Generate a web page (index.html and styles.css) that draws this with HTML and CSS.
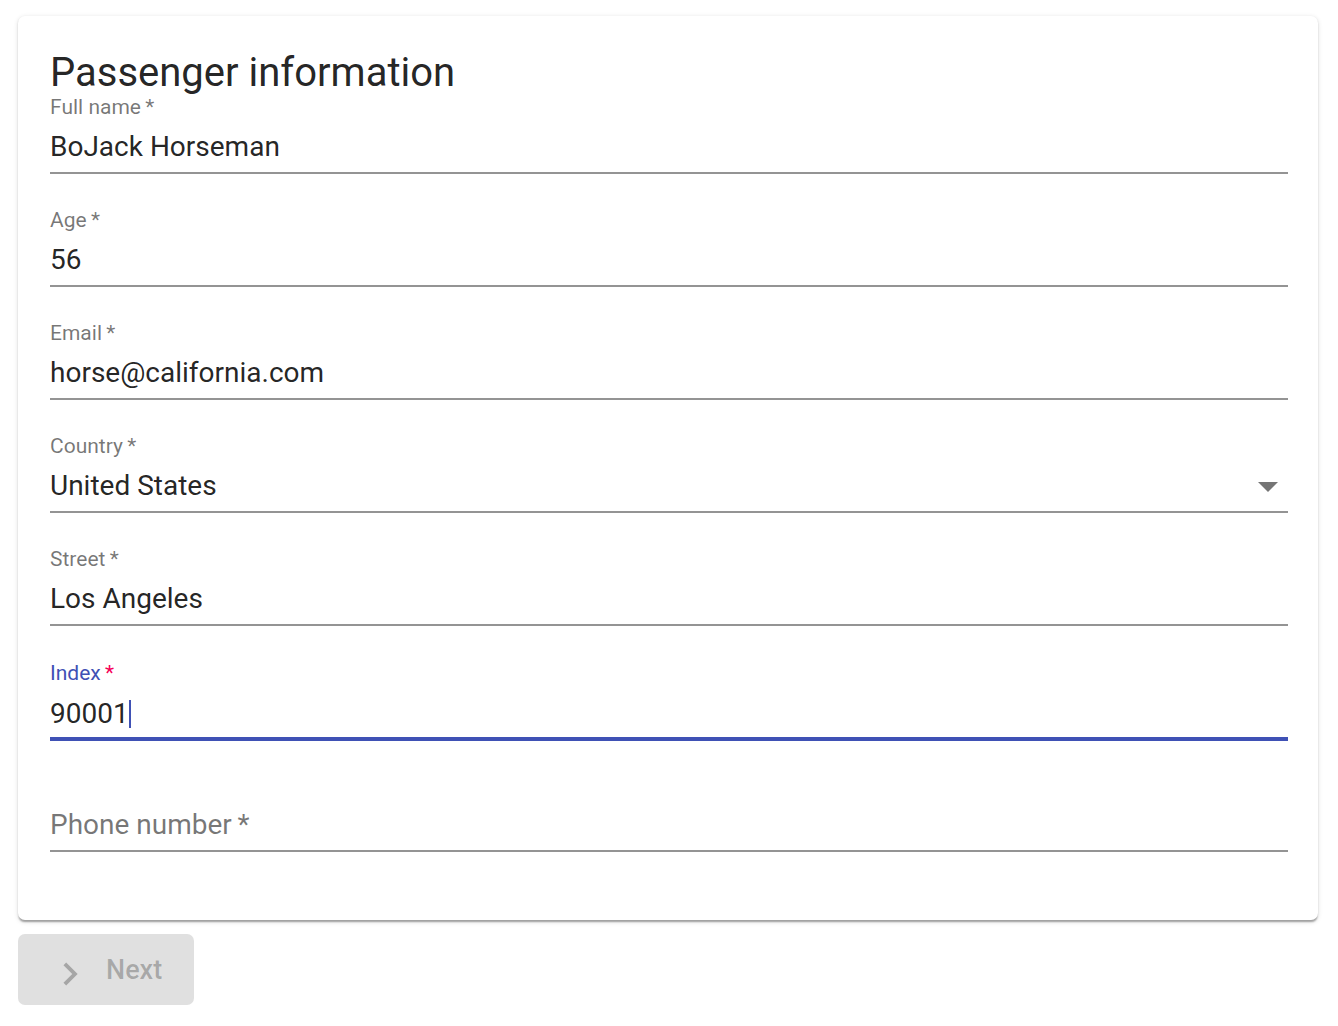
FILE: index.html
```html
<!DOCTYPE html>
<html>
<head>
<meta charset="utf-8">
<link rel="stylesheet" href="styles.css">
</head>
<body>
<div class="page">
  <div class="card">
    <h2 class="title">Passenger information</h2>
    <div class="field">
      <div class="label">Full name&thinsp;*</div>
      <div class="control"><div class="value">BoJack Horseman</div></div>
    </div>
    <div class="field">
      <div class="label">Age&thinsp;*</div>
      <div class="control"><div class="value">56</div></div>
    </div>
    <div class="field">
      <div class="label">Email&thinsp;*</div>
      <div class="control"><div class="value">horse@california.com</div></div>
    </div>
    <div class="field">
      <div class="label">Country&thinsp;*</div>
      <div class="control select"><div class="value">United States</div><span class="arrow"></span></div>
    </div>
    <div class="field">
      <div class="label">Street&thinsp;*</div>
      <div class="control"><div class="value">Los Angeles</div></div>
    </div>
    <div class="field focused">
      <div class="label">Index&thinsp;<span class="req">*</span></div>
      <div class="control"><div class="value">90001<span class="caret"></span></div></div>
    </div>
    <div class="field empty">
      <div class="label"></div>
      <div class="control"><div class="value placeholder">Phone number&thinsp;*</div></div>
    </div>
  </div>
  <button class="next" type="button">
    <svg class="chev" viewBox="0 0 24 24" width="46" height="46"><path d="M10 6L8.59 7.41 13.17 12l-4.58 4.59L10 18l6-6z" fill="currentColor"/></svg>
    <span class="next-text">Next</span>
  </button>
</div>
</body>
</html>
```

FILE: styles.css
```css
html, body {
  margin: 0;
  padding: 0;
  background: #ffffff;
}
body {
  font-family: Roboto, "Liberation Sans", Arial, sans-serif;
  color: rgba(0, 0, 0, 0.87);
}
.page {
  padding: 16px 20px 0 18px;
}
.card {
  background: #fff;
  border-radius: 7px;
  padding: 33px 30px 32px 32px;
  box-shadow: 0 3.5px 1.75px -1.75px rgba(0,0,0,0.2), 0 1.75px 1.75px 0 rgba(0,0,0,0.14), 0 1.75px 5px 0 rgba(0,0,0,0.12);
}
.title {
  margin: 0;
  font-size: 40px;
  font-weight: 400;
  line-height: 48px;
  color: rgba(0, 0, 0, 0.87);
}
.field {
  margin-bottom: 36px;
}
.label {
  font-size: 21px;
  line-height: 21px;
  height: 21px;
  color: rgba(0, 0, 0, 0.54);
}
.control {
  display: flex;
  align-items: center;
  padding: 12px 0 9px 0;
  border-bottom: 2px solid rgba(0, 0, 0, 0.42);
}
.value {
  flex: 1;
  font-size: 28px;
  line-height: 33px;
  height: 33px;
  white-space: nowrap;
  color: rgba(0, 0, 0, 0.87);
}
.placeholder {
  color: rgba(0, 0, 0, 0.54);
}
.select .arrow {
  width: 0;
  height: 0;
  border-left: 10px solid transparent;
  border-right: 10px solid transparent;
  border-top: 10px solid rgba(0, 0, 0, 0.54);
  margin-right: 10px;
  margin-top: 2px;
}
.focused .label {
  color: #3f51b5;
  padding-top: 1px;
  height: 20px;
}
.focused .req {
  color: #f50057;
}
.focused .control {
  border-bottom-color: #3f51b5;
  box-shadow: 0 2px 0 #3f51b5;
}
.focused .value {
  padding-top: 2px;
  height: 31px;
}
.caret {
  display: inline-block;
  width: 2px;
  height: 28px;
  background: #3f51b5;
  vertical-align: -5px;
  margin-left: 0;
}
.next {
  margin-top: 14px;
  width: 176px;
  height: 71px;
  border: none;
  border-radius: 7px;
  background: #e0e0e0;
  color: rgba(0, 0, 0, 0.26);
  display: flex;
  align-items: center;
  padding: 0 0 0 29px;
  font-family: Roboto, "Liberation Sans", Arial, sans-serif;
  cursor: default;
}
.chev {
  display: block;
  margin-top: 8px;
  flex: none;
}
.next-text {
  margin-left: 13px;
  margin-top: 2px;
  font-size: 27px;
  font-weight: 500;
  line-height: 27px;
}
```
